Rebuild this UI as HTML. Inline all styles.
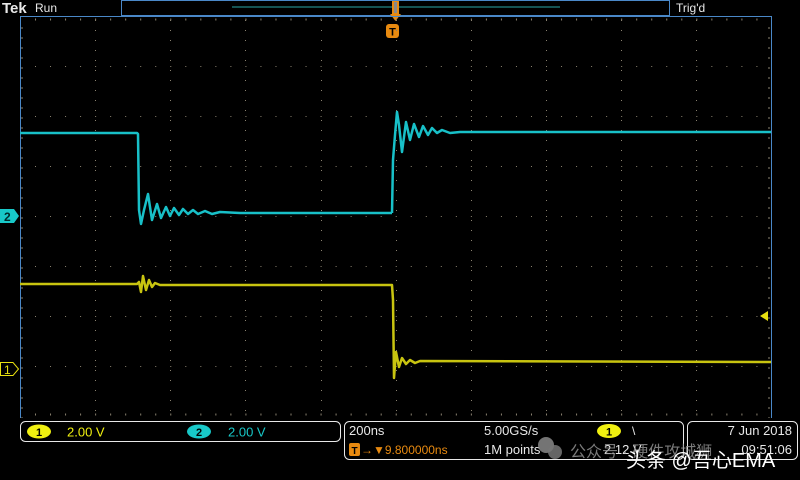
<!DOCTYPE html>
<html><head><style>
html,body{margin:0;padding:0;background:#000;width:800px;height:480px;overflow:hidden}
svg{display:block}
text{font-family:"Liberation Sans",sans-serif}
</style></head><body>
<svg width="800" height="480" viewBox="0 0 800 480">
<rect width="800" height="480" fill="#000"/>
<!-- header -->
<text x="2" y="13" font-size="15" font-weight="bold" fill="#e8e8e8" font-family="Liberation Serif,serif">Tek</text>
<text x="35" y="12" font-size="12" fill="#e8e8e8">Run</text>
<rect x="121.5" y="0.5" width="548" height="15" fill="none" stroke="#4a88c8" stroke-width="1"/>
<line x1="232" y1="7" x2="560" y2="7" stroke="#2aa8a8" stroke-width="1"/>
<rect x="392" y="1" width="7" height="13" fill="#e88a10"/>
<rect x="394" y="2" width="3" height="11" fill="#888"/>
<polygon points="390,14 401,14 395.5,21" fill="#e88a10"/>
<rect x="386" y="24" width="13" height="14" rx="3" fill="#e88a10"/>
<text x="392.5" y="35.5" font-size="11" font-weight="bold" fill="#000" text-anchor="middle">T</text>
<text x="676" y="12" font-size="12" fill="#e8e8e8">Trig'd</text>
<!-- graticule -->
<g stroke="#8a8270" stroke-width="1">
<g stroke-dasharray="1 9">
<line x1="95.5" y1="20" x2="95.5" y2="418"/>
<line x1="170.5" y1="20" x2="170.5" y2="418"/>
<line x1="245.5" y1="20" x2="245.5" y2="418"/>
<line x1="321.5" y1="20" x2="321.5" y2="418"/>
<line x1="396.5" y1="20" x2="396.5" y2="418"/>
<line x1="471.5" y1="20" x2="471.5" y2="418"/>
<line x1="546.5" y1="20" x2="546.5" y2="418"/>
<line x1="621.5" y1="20" x2="621.5" y2="418"/>
<line x1="696.5" y1="20" x2="696.5" y2="418"/>
<line x1="22" y1="27.5" x2="22" y2="418" stroke-width="2"/>
<line x1="769" y1="27.5" x2="769" y2="418" stroke-width="2"/>
</g>
<g stroke-dasharray="1 14.03">
<line x1="35" y1="66.5" x2="772" y2="66.5"/>
<line x1="35" y1="116.5" x2="772" y2="116.5"/>
<line x1="35" y1="166.5" x2="772" y2="166.5"/>
<line x1="35" y1="216.5" x2="772" y2="216.5"/>
<line x1="35" y1="266.5" x2="772" y2="266.5"/>
<line x1="35" y1="316.5" x2="772" y2="316.5"/>
<line x1="35" y1="366.5" x2="772" y2="366.5"/>
<line x1="35" y1="19.5" x2="772" y2="19.5" stroke-width="2"/>
<line x1="35" y1="414.5" x2="772" y2="414.5" stroke-width="2"/>
</g>
</g>
<line x1="20.5" y1="16" x2="20.5" y2="418" stroke="#4a88c8"/>
<line x1="20" y1="16.5" x2="772" y2="16.5" stroke="#4a88c8"/>
<line x1="771.5" y1="16" x2="771.5" y2="418" stroke="#4a88c8"/>
<!-- waveforms -->
<polyline fill="none" stroke="#18c0c8" stroke-width="2.5" stroke-linejoin="round" points="20,133 137,133 138,134 139,210 141,224 144,210 148,194 152,220 157,204 161,218 166,207 170,216 174,208 179,215 183,209 188,214 193,210 198,214 205,211 212,214 220,212 240,213 392,213"/>
<polyline fill="none" stroke="#18c0c8" stroke-width="2.5" stroke-linejoin="round" points="392,213 393,160 395,135 397,112 399,125 402,152 406,122 410,140 414,124 419,137 423,126 428,135 432,128 437,133 442,130 450,133 460,132 771,132"/>
<polyline fill="none" stroke="#c8c410" stroke-width="2.5" stroke-linejoin="round" points="20,284 137,284 139,282 141,292 143,276 146,290 149,280 152,287 155,283 160,285 392,285 393,300 394,378 396,352 399,367 402,358 406,364 410,360 415,363 420,361 771,362"/>
<!-- markers -->
<polygon points="0,209 14,209 19,216 14,223 0,223" fill="#18c8c8"/>
<text x="4" y="221" font-size="12" font-weight="bold" fill="#002a2a">2</text>
<polygon points="0.5,362.5 13,362.5 18.5,369 13,375.5 0.5,375.5" fill="#000" stroke="#e8e010"/>
<text x="4" y="374" font-size="12" fill="#e8e010">1</text>
<polygon points="760,316 768,311 768,321" fill="#e8e010"/>
<!-- bottom boxes -->
<rect x="20.5" y="421.5" width="320" height="20" rx="5" fill="none" stroke="#e8e8e8"/>
<ellipse cx="39" cy="431.5" rx="12" ry="7" fill="#f0f010"/>
<text x="39" y="436" font-size="11" font-weight="bold" fill="#000" text-anchor="middle">1</text>
<text x="67" y="436.5" font-size="13" fill="#f0f010">2.00 V</text>
<ellipse cx="199" cy="431.5" rx="12" ry="7" fill="#18c8c8"/>
<text x="199" y="436" font-size="11" font-weight="bold" fill="#000" text-anchor="middle">2</text>
<text x="228" y="436.5" font-size="13" fill="#18c8c8">2.00 V</text>
<rect x="344.5" y="421.5" width="339" height="38" rx="5" fill="none" stroke="#e8e8e8"/>
<text x="349" y="435" font-size="13" fill="#e8e8e8">200ns</text>
<rect x="349" y="443" width="11" height="13" rx="2" fill="#e88a10"/>
<text x="354.5" y="454" font-size="10" font-weight="bold" fill="#000" text-anchor="middle">T</text>
<text x="361" y="454" font-size="12" fill="#e88a10">→▼9.800000ns</text>
<text x="484" y="435" font-size="13" fill="#e8e8e8">5.00GS/s</text>
<text x="484" y="454" font-size="13" fill="#e8e8e8">1M points</text>
<ellipse cx="609" cy="431" rx="12" ry="7" fill="#f0f010"/>
<text x="609" y="435.5" font-size="11" font-weight="bold" fill="#000" text-anchor="middle">1</text>
<text x="632" y="435" font-size="12" fill="#e8e8e8">\</text>
<text x="604" y="454" font-size="13" fill="#e8e8e8">2.12 V</text>
<rect x="687.5" y="421.5" width="110" height="38" rx="5" fill="none" stroke="#e8e8e8"/>
<text x="792" y="435" font-size="13" fill="#e8e8e8" text-anchor="end">7 Jun  2018</text>
<text x="792" y="454" font-size="13" fill="#e8e8e8" text-anchor="end">09:51:06</text>
<!-- watermark -->
<circle cx="546" cy="445" r="8" fill="#888" opacity="0.85"/>
<circle cx="555" cy="452" r="7" fill="#777" opacity="0.85"/>
<text x="570" y="457" font-size="16" fill="#999" opacity="0.8" font-family="Liberation Sans,Noto Sans CJK SC,sans-serif">公众号 · 硬件攻城狮</text>
<text x="626" y="467" font-size="20" fill="#fff" font-family="Liberation Sans,Noto Sans CJK SC,sans-serif">头条 @吾心EMA</text>
</svg>
</body></html>
